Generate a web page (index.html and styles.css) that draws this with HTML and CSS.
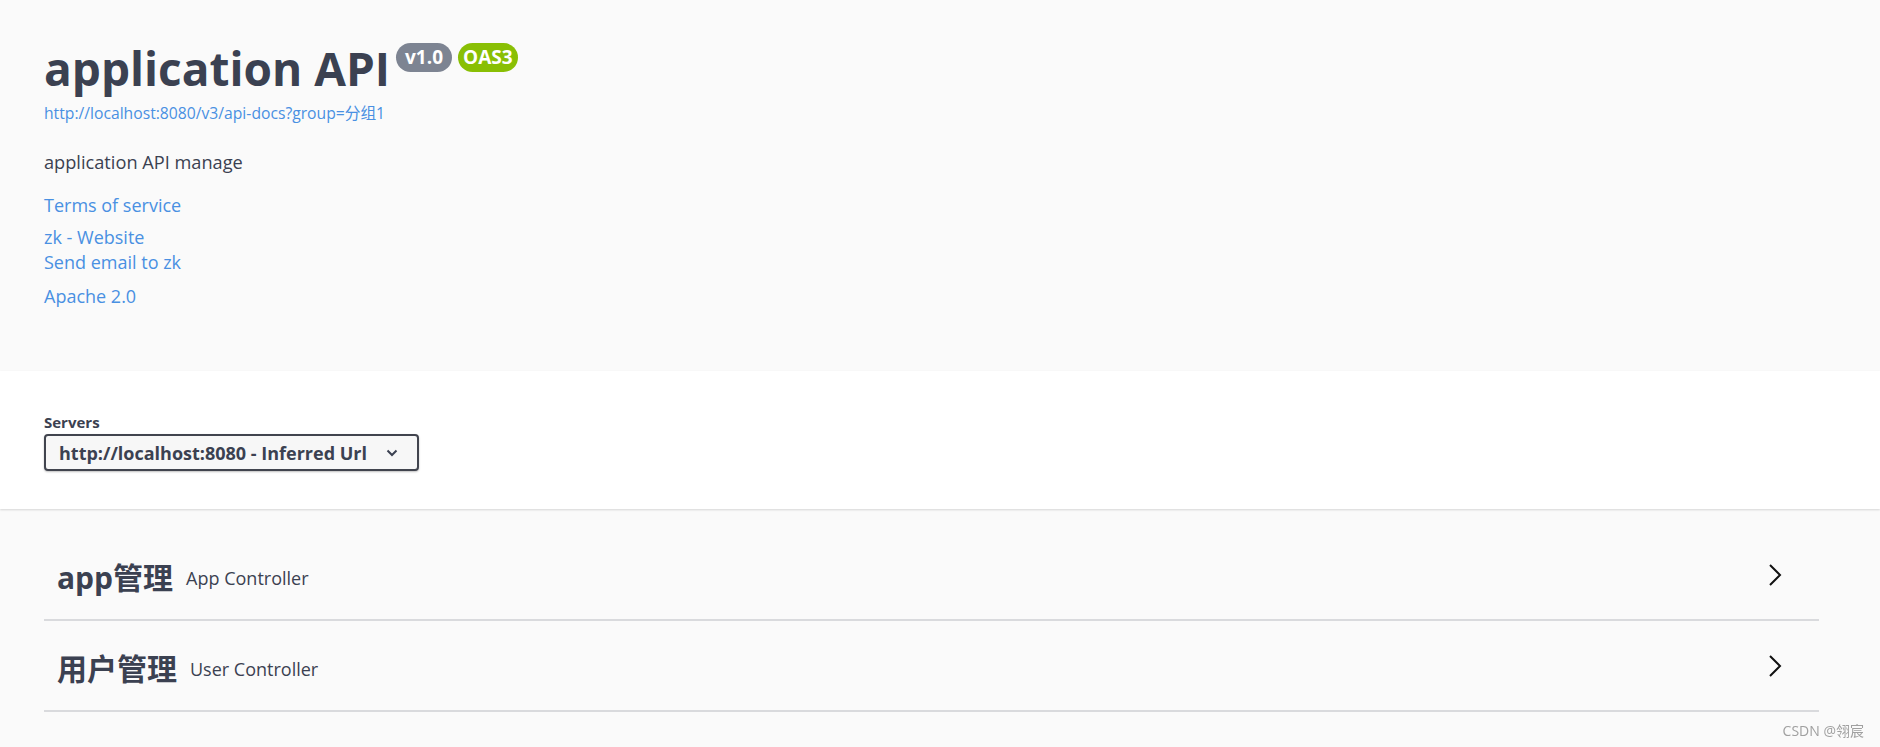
FILE: index.html
```html
<!DOCTYPE html>
<html lang="zh-CN">
<head>
    <meta charset="UTF-8">
    <meta name="viewport" content="width=device-width, initial-scale=1.0">
    <title>Swagger UI</title>
    <link rel="stylesheet" href="styles.css">
</head>
<body>
    <section class="info">
        <div class="title-row">
            <h2 class="title">application API</h2>
            <span class="badge badge-version">v1.0</span>
            <span class="badge badge-oas">OAS3</span>
        </div>
        <a class="base-url" href="#">http://localhost:8080/v3/api-docs?group=分组1</a>
        <p class="desc">application API manage</p>
        <a class="info-link terms" href="#">Terms of service</a>
        <div class="contact">
            <a class="info-link" href="#">zk - Website</a><br>
            <a class="info-link" href="#">Send email to zk</a>
        </div>
        <a class="info-link license" href="#">Apache 2.0</a>
    </section>

    <section class="servers">
        <span class="servers-label">Servers</span>
        <div class="select">
            <span>http://localhost:8080 - Inferred Url</span>
            <svg width="12" height="8" viewBox="0 0 12 8"><polyline points="1.5,1.5 6,6 10.5,1.5" fill="none" stroke="#3b4151" stroke-width="2"/></svg>
        </div>
    </section>

    <section class="tags">
        <div class="tag">
            <h3>app管理</h3>
            <small>App Controller</small>
            <svg class="arrow" width="14" height="24" viewBox="0 0 14 24"><polyline points="2,2 12,12 2,22" fill="none" stroke="#111" stroke-width="2"/></svg>
        </div>
        <div class="tag">
            <h3>用户管理</h3>
            <small>User Controller</small>
            <svg class="arrow" width="14" height="24" viewBox="0 0 14 24"><polyline points="2,2 12,12 2,22" fill="none" stroke="#111" stroke-width="2"/></svg>
        </div>
    </section>

    <div class="watermark">CSDN @翎宸</div>
</body>
</html>
```

FILE: styles.css
```css
*{
    margin: 0px;
    padding: 0px;
    box-sizing: border-box;
}
body{
    background: #fafafa;
    font-family: "Open Sans", "Noto Sans CJK SC", sans-serif;
    color: #3b4151;
    overflow: hidden;
}
a{
    text-decoration: none;
    color: #4990e2;
}

/* info block */
.info{
    height: 371px;
    padding: 43px 61px 0 44px;
}
.title-row{
    display: flex;
    align-items: flex-start;
}
.title{
    font-size: 46px;
    line-height: 50px;
    font-weight: 700;
    margin-right: 6px;
}
.badge{
    height: 29px;
    line-height: 29px;
    border-radius: 15px;
    color: #fff;
    font-size: 19px;
    font-weight: 700;
}
.badge-version{
    background: #7d8492;
    padding: 0 9px;
    margin-right: 6px;
}
.badge-oas{
    background: #89bf04;
    padding: 0 5px;
}
.base-url{
    display: block;
    margin-top: 10px;
    font-size: 15.7px;
    line-height: 20px;
}
.desc{
    margin-top: 27px;
    font-size: 18.2px;
    line-height: 24px;
}
.info-link{
    font-size: 18px;
    line-height: 24px;
}
.terms{
    display: block;
    margin-top: 19px;
}
.contact{
    margin-top: 8px;
    font-size: 18px;
    line-height: 25px;
}
.license{
    display: block;
    margin-top: 9px;
}

/* servers */
.servers{
    height: 138px;
    padding: 42px 0 0 44px;
    background: #fff;
    box-shadow: 0 1px 2px 0 rgba(0,0,0,.15);
}
.servers-label{
    display: block;
    font-size: 15px;
    line-height: 18px;
    font-weight: 700;
}
.select{
    margin-top: 3px;
    width: 375px;
    height: 37px;
    display: flex;
    align-items: center;
    justify-content: space-between;
    padding: 0 19px 0 13px;
    border: 2px solid #41444e;
    border-radius: 4px;
    background: #f7f7f7;
    box-shadow: 0 1px 2px 0 rgba(0,0,0,.25);
    font-size: 18px;
    font-weight: 700;
}

/* tags */
.tags{
    padding: 27px 61px 0 44px;
}
.tag{
    height: 85px;
    margin-bottom: 6px;
    display: flex;
    align-items: center;
    padding-left: 13px;
    border-bottom: 2px solid #d9dadd;
}
.tag > h3{
    font-size: 30px;
    line-height: 36px;
    font-weight: 700;
}
.tag > small{
    font-size: 18px;
    line-height: 24px;
    margin-left: 13px;
    flex: 1;
}
.arrow{
    margin: -6px 37px 0 0;
}

.watermark{
    position: fixed;
    right: 16px;
    bottom: 7px;
    font-size: 14px;
    color: #a0a0a0;
}
```
